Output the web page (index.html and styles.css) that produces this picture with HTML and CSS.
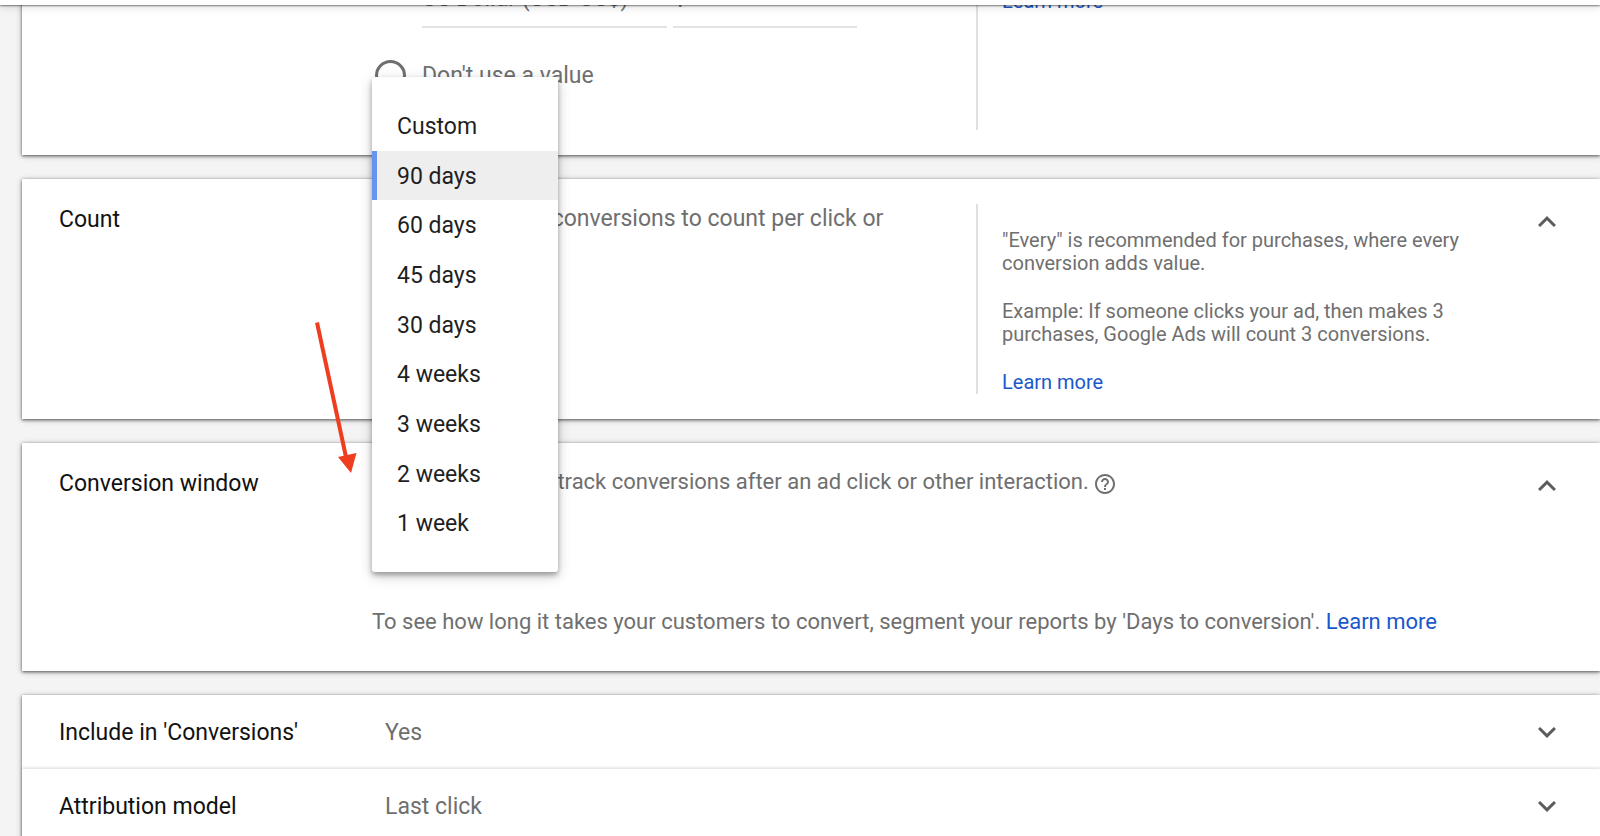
FILE: index.html
```html
<!DOCTYPE html>
<html lang="en">
<head>
  <meta charset="UTF-8" />
  <title>Conversion action settings</title>
  <meta name="viewport" content="width=device-width, initial-scale=1.0" />
  <link rel="stylesheet" href="styles.css">
</head>
<body>

<header class="topbar"></header>

<main class="settings">

  <!-- Value -->
  <section class="card value-card">
    <div class="label"></div>
    <div class="content">
      <div class="money">
        <select class="currency" aria-label="Currency">
          <option>US Dollar (USD US$)</option>
        </select>
        <input class="amount" type="text" value="1" aria-label="Value" />
      </div>
      <div class="radio-row">
        <input type="radio" id="noValue" name="value" />
        <label for="noValue">Don't use a value</label>
      </div>
    </div>
    <div class="help">
      <p><a href="#">Learn more</a></p>
    </div>
  </section>

  <!-- Count -->
  <section class="card">
    <h2 class="label">Count</h2>
    <div class="content">
      <p class="lead">Select how many conversions to count per click or interaction.</p>
    </div>
    <div class="help">
      <p>"Every" is recommended for purchases, where every conversion adds value.</p>
      <p>Example: If someone clicks your ad, then makes 3 purchases, Google Ads will count 3 conversions.</p>
      <p><a href="#">Learn more</a></p>
    </div>
    <button class="toggle" aria-label="Collapse Count">
      <svg viewBox="0 0 24 24"><path d="M12 8l-6 6 1.41 1.41L12 10.83l4.59 4.58L18 14z"/></svg>
    </button>
  </section>

  <!-- Conversion window -->
  <section class="card window-card">
    <h2 class="label">Conversion window</h2>
    <div class="content wide">
      <div class="lead-row">
        <p class="lead small">Select how long to track conversions after an ad click or other interaction.</p>
        <button class="info" aria-label="Help">
          <svg viewBox="0 0 24 24"><path d="M11 18h2v-2h-2v2zm1-16C6.48 2 2 6.48 2 12s4.480 10 10 10 10-4.480 10-10S17.520 2 12 2zm0 18c-4.410 0-8-3.590-8-8s3.590-8 8-8 8 3.590 8 8-3.590 8-8 8zm0-14c-2.210 0-4 1.790-4 4h2c0-1.100.9-2 2-2s2 .9 2 2c0 2-3 1.750-3 5h2c0-2.250 3-2.500 3-5 0-2.210-1.790-4-4-4z"/></svg>
        </button>
      </div>
      <p class="lead small note">To see how long it takes your customers to convert, segment your reports by 'Days to conversion'. <a href="#">Learn more</a></p>

      <div class="menu" role="listbox" aria-label="Conversion window">
        <button role="option">Custom</button>
        <button role="option" class="active" aria-selected="true">90 days</button>
        <button role="option">60 days</button>
        <button role="option">45 days</button>
        <button role="option">30 days</button>
        <button role="option">4 weeks</button>
        <button role="option">3 weeks</button>
        <button role="option">2 weeks</button>
        <button role="option">1 week</button>
      </div>
    </div>
    <button class="toggle" aria-label="Collapse Conversion window">
      <svg viewBox="0 0 24 24"><path d="M12 8l-6 6 1.41 1.41L12 10.83l4.59 4.58L18 14z"/></svg>
    </button>

    <svg class="arrow" viewBox="0 0 44 155">
      <path d="M3 2.500L32 137" stroke="#ef3e1f" stroke-width="4" fill="none"/>
      <path d="M24 137l18.500-4L37 153z" fill="#ef3e1f"/>
    </svg>
  </section>

  <!-- Collapsed rows -->
  <section class="rows">
    <div class="row">
      <h2 class="label">Include in 'Conversions'</h2>
      <div class="row-value">Yes</div>
      <button class="toggle" aria-label="Expand Include in Conversions">
        <svg viewBox="0 0 24 24"><path d="M16.590 8.590L12 13.170 7.410 8.590 6 10l6 6 6-6z"/></svg>
      </button>
    </div>
    <div class="row">
      <h2 class="label">Attribution model</h2>
      <div class="row-value">Last click</div>
      <button class="toggle" aria-label="Expand Attribution model">
        <svg viewBox="0 0 24 24"><path d="M16.590 8.590L12 13.170 7.410 8.590 6 10l6 6 6-6z"/></svg>
      </button>
    </div>
  </section>

</main>

</body>
</html>
```
FILE: styles.css
```css
* {
  box-sizing: border-box;
}
body {
  margin: 0;
  height: 100vh;
  overflow: hidden;
  background-color: #f4f4f4;
  color: #1f1f1f;
  font-family: Roboto, sans-serif;
  font-size: 23px;
  line-height: 28px;
}
h2, p {
  margin: 0;
}
a {
  color: #1a57cc;
  text-decoration: none;
}
button {
  padding: 0;
  border: 0;
  background: none;
  font: inherit;
  color: inherit;
  cursor: pointer;
}
.topbar {
  position: fixed;
  top: 0;
  left: 0;
  right: 0;
  z-index: 10;
  height: 5px;
  background-color: #fff;
  box-shadow: 0 1px 2px rgba(0, 0, 0, 0.5), 0 2px 8px rgba(0, 0, 0, 0.16);
}
.settings {
  display: flex;
  flex-direction: column;
  gap: 24px;
  padding-left: 22px;
}

/* cards */
.card {
  position: relative;
  display: grid;
  grid-template-columns: 313px 604px 1fr 36px;
  padding: 25px 35px 25px 37px;
  background-color: #fff;
}
.card, .rows {
  box-shadow: 0 1px 3px rgba(0, 0, 0, 0.6), 0 1px 7px rgba(0, 0, 0, 0.2);
}
.label {
  font-size: 23px;
  font-weight: 400;
  line-height: 32px;
  color: #111;
}
.content {
  position: relative;
  color: #6f6f6f;
}
.content.wide {
  grid-column: 2 / 4;
}
.lead {
  padding-right: 60px;
  line-height: 30px;
}
.lead.small {
  font-size: 22px;
  line-height: 28px;
  padding-right: 0;
}
.help {
  padding: 25px 60px 0 24px;
  border-left: 2px solid #e0e0e0;
  font-size: 20px;
  line-height: 23px;
  color: #6f6f6f;
}
.help p + p {
  margin-top: 25px;
}
.toggle {
  width: 36px;
  height: 36px;
  color: #5c5c5c;
}
.toggle svg, .info svg {
  display: block;
  width: 100%;
  height: 100%;
  fill: currentColor;
}

/* value */
.value-card {
  margin-top: -60px;
}
.value-card .content {
  padding: 20px 0 39px;
}
.money {
  display: flex;
  gap: 6px;
  margin-left: 50px;
}
.currency, .amount {
  height: 43px;
  padding: 0 0 13px;
  border: 0;
  border-bottom: 2px solid #e3e3e3;
  border-radius: 0;
  background: none;
  appearance: none;
  font: inherit;
  color: #6f6f6f;
}
.currency {
  width: 245px;
}
.amount {
  width: 184px;
}
.radio-row {
  display: flex;
  align-items: center;
  gap: 16px;
  margin: 32px 0 0 3px;
}
.radio-row input {
  appearance: none;
  width: 31px;
  height: 31px;
  margin: 0;
  border: 3px solid #6f6f6f;
  border-radius: 50%;
}

/* conversion window */
.lead-row {
  display: flex;
  gap: 4px;
}
.info {
  width: 24px;
  height: 24px;
  margin-top: 4px;
  color: #6f6f6f;
}
.note {
  margin-top: 112px;
}
.window-card {
  padding-bottom: 35px;
}
.menu {
  position: absolute;
  top: -391px;
  left: 0;
  z-index: 5;
  display: flex;
  flex-direction: column;
  width: 186px;
  height: 495px;
  padding: 24px 0;
  border-radius: 3px;
  background-color: #fff;
  box-shadow: 0 3px 5px rgba(0, 0, 0, 0.3), 0 4px 14px rgba(0, 0, 0, 0.2);
}
.menu button {
  flex: 1;
  padding: 2px 0 0 20px;
  border-left: 5px solid transparent;
  text-align: left;
  color: #1f1f1f;
}
.menu .active {
  background-color: #eee;
  border-left-color: #6694ef;
}
.arrow {
  position: absolute;
  top: -123px;
  left: 292px;
  width: 44px;
  height: 155px;
}

/* collapsed rows */
.rows {
  background-color: #fff;
}
.row {
  display: grid;
  grid-template-columns: 326px 1fr 36px;
  align-items: center;
  height: 74px;
  padding: 0 35px 0 37px;
}
.row .label, .row-value {
  padding-top: 2px;
}
.row + .row {
  box-shadow: 0 -1px 3px rgba(0, 0, 0, 0.15);
}
.row-value {
  color: #6f6f6f;
}
```
